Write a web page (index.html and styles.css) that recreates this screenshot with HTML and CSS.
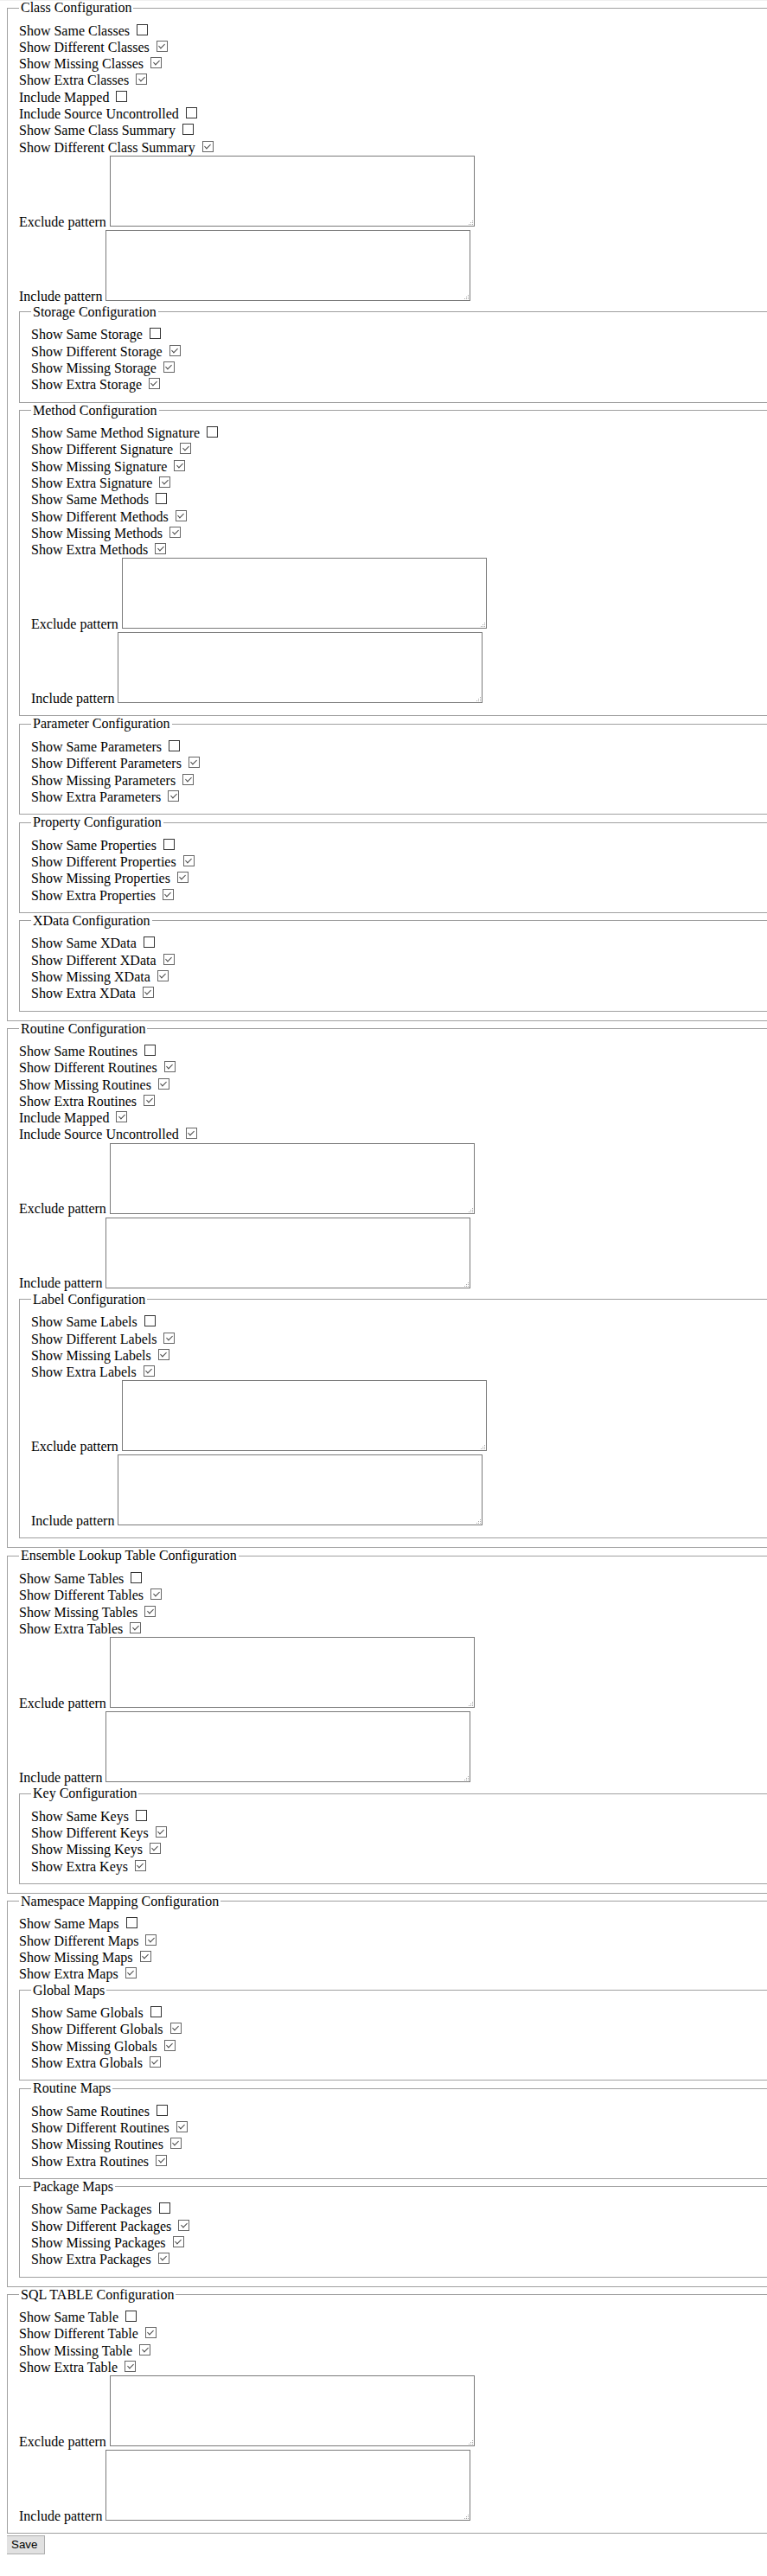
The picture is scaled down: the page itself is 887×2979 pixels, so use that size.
FILE: index.html
```html
<!DOCTYPE html>
<html>
<head>
<meta charset="utf-8">
<title>Configuration</title>
<link rel="stylesheet" href="styles.css">
</head>
<body>
<form class="config">
  <fieldset class="group">
    <legend>Class Configuration</legend>
    <label class="row">Show Same Classes <input type="checkbox"></label>
    <label class="row">Show Different Classes <input type="checkbox" checked></label>
    <label class="row">Show Missing Classes <input type="checkbox" checked></label>
    <label class="row">Show Extra Classes <input type="checkbox" checked></label>
    <label class="row">Include Mapped <input type="checkbox"></label>
    <label class="row">Include Source Uncontrolled <input type="checkbox"></label>
    <label class="row">Show Same Class Summary <input type="checkbox"></label>
    <label class="row">Show Different Class Summary <input type="checkbox" checked></label>
    <div class="pattern"><label>Exclude pattern</label><textarea></textarea></div>
    <div class="pattern"><label>Include pattern</label><textarea></textarea></div>

    <fieldset class="group sub">
      <legend>Storage Configuration</legend>
      <label class="row">Show Same Storage <input type="checkbox"></label>
      <label class="row">Show Different Storage <input type="checkbox" checked></label>
      <label class="row">Show Missing Storage <input type="checkbox" checked></label>
      <label class="row">Show Extra Storage <input type="checkbox" checked></label>
    </fieldset>

    <fieldset class="group sub">
      <legend>Method Configuration</legend>
      <label class="row">Show Same Method Signature <input type="checkbox"></label>
      <label class="row">Show Different Signature <input type="checkbox" checked></label>
      <label class="row">Show Missing Signature <input type="checkbox" checked></label>
      <label class="row">Show Extra Signature <input type="checkbox" checked></label>
      <label class="row">Show Same Methods <input type="checkbox"></label>
      <label class="row">Show Different Methods <input type="checkbox" checked></label>
      <label class="row">Show Missing Methods <input type="checkbox" checked></label>
      <label class="row">Show Extra Methods <input type="checkbox" checked></label>
      <div class="pattern"><label>Exclude pattern</label><textarea></textarea></div>
      <div class="pattern"><label>Include pattern</label><textarea></textarea></div>
    </fieldset>

    <fieldset class="group sub">
      <legend>Parameter Configuration</legend>
      <label class="row">Show Same Parameters <input type="checkbox"></label>
      <label class="row">Show Different Parameters <input type="checkbox" checked></label>
      <label class="row">Show Missing Parameters <input type="checkbox" checked></label>
      <label class="row">Show Extra Parameters <input type="checkbox" checked></label>
    </fieldset>

    <fieldset class="group sub">
      <legend>Property Configuration</legend>
      <label class="row">Show Same Properties <input type="checkbox"></label>
      <label class="row">Show Different Properties <input type="checkbox" checked></label>
      <label class="row">Show Missing Properties <input type="checkbox" checked></label>
      <label class="row">Show Extra Properties <input type="checkbox" checked></label>
    </fieldset>

    <fieldset class="group sub">
      <legend>XData Configuration</legend>
      <label class="row">Show Same XData <input type="checkbox"></label>
      <label class="row">Show Different XData <input type="checkbox" checked></label>
      <label class="row">Show Missing XData <input type="checkbox" checked></label>
      <label class="row">Show Extra XData <input type="checkbox" checked></label>
    </fieldset>
  </fieldset>

  <fieldset class="group">
    <legend>Routine Configuration</legend>
    <label class="row">Show Same Routines <input type="checkbox"></label>
    <label class="row">Show Different Routines <input type="checkbox" checked></label>
    <label class="row">Show Missing Routines <input type="checkbox" checked></label>
    <label class="row">Show Extra Routines <input type="checkbox" checked></label>
    <label class="row">Include Mapped <input type="checkbox" checked></label>
    <label class="row">Include Source Uncontrolled <input type="checkbox" checked></label>
    <div class="pattern"><label>Exclude pattern</label><textarea></textarea></div>
    <div class="pattern"><label>Include pattern</label><textarea></textarea></div>

    <fieldset class="group sub">
      <legend>Label Configuration</legend>
      <label class="row">Show Same Labels <input type="checkbox"></label>
      <label class="row">Show Different Labels <input type="checkbox" checked></label>
      <label class="row">Show Missing Labels <input type="checkbox" checked></label>
      <label class="row">Show Extra Labels <input type="checkbox" checked></label>
      <div class="pattern"><label>Exclude pattern</label><textarea></textarea></div>
      <div class="pattern"><label>Include pattern</label><textarea></textarea></div>
    </fieldset>
  </fieldset>

  <fieldset class="group">
    <legend>Ensemble Lookup Table Configuration</legend>
    <label class="row">Show Same Tables <input type="checkbox"></label>
    <label class="row">Show Different Tables <input type="checkbox" checked></label>
    <label class="row">Show Missing Tables <input type="checkbox" checked></label>
    <label class="row">Show Extra Tables <input type="checkbox" checked></label>
    <div class="pattern"><label>Exclude pattern</label><textarea></textarea></div>
    <div class="pattern"><label>Include pattern</label><textarea></textarea></div>

    <fieldset class="group sub">
      <legend>Key Configuration</legend>
      <label class="row">Show Same Keys <input type="checkbox"></label>
      <label class="row">Show Different Keys <input type="checkbox" checked></label>
      <label class="row">Show Missing Keys <input type="checkbox" checked></label>
      <label class="row">Show Extra Keys <input type="checkbox" checked></label>
    </fieldset>
  </fieldset>

  <fieldset class="group">
    <legend>Namespace Mapping Configuration</legend>
    <label class="row">Show Same Maps <input type="checkbox"></label>
    <label class="row">Show Different Maps <input type="checkbox" checked></label>
    <label class="row">Show Missing Maps <input type="checkbox" checked></label>
    <label class="row">Show Extra Maps <input type="checkbox" checked></label>

    <fieldset class="group sub">
      <legend>Global Maps</legend>
      <label class="row">Show Same Globals <input type="checkbox"></label>
      <label class="row">Show Different Globals <input type="checkbox" checked></label>
      <label class="row">Show Missing Globals <input type="checkbox" checked></label>
      <label class="row">Show Extra Globals <input type="checkbox" checked></label>
    </fieldset>

    <fieldset class="group sub">
      <legend>Routine Maps</legend>
      <label class="row">Show Same Routines <input type="checkbox"></label>
      <label class="row">Show Different Routines <input type="checkbox" checked></label>
      <label class="row">Show Missing Routines <input type="checkbox" checked></label>
      <label class="row">Show Extra Routines <input type="checkbox" checked></label>
    </fieldset>

    <fieldset class="group sub">
      <legend>Package Maps</legend>
      <label class="row">Show Same Packages <input type="checkbox"></label>
      <label class="row">Show Different Packages <input type="checkbox" checked></label>
      <label class="row">Show Missing Packages <input type="checkbox" checked></label>
      <label class="row">Show Extra Packages <input type="checkbox" checked></label>
    </fieldset>
  </fieldset>

  <fieldset class="group">
    <legend>SQL TABLE Configuration</legend>
    <label class="row">Show Same Table <input type="checkbox"></label>
    <label class="row">Show Different Table <input type="checkbox" checked></label>
    <label class="row">Show Missing Table <input type="checkbox" checked></label>
    <label class="row">Show Extra Table <input type="checkbox" checked></label>
    <div class="pattern"><label>Exclude pattern</label><textarea></textarea></div>
    <div class="pattern"><label>Include pattern</label><textarea></textarea></div>
  </fieldset>

  <button type="button" class="save">Save</button>
</form>
</body>
</html>
```

FILE: styles.css
```css
html {
  background: linear-gradient(#f0f0f0, #f0f0f0) top left / 100% 1px no-repeat, #fff;
}

body {
  margin: 0 0 0 8px;
  font-family: "Liberation Serif", "Times New Roman", serif;
  font-size: 16px;
  color: #000;
}

.config {
  margin: 0;
}

.group {
  margin: 0;
  padding: 7.5px 0 10px 13px;
  border: 1px solid #a0a0a0;
  border-right: none;
  min-width: 0;
}

.group legend {
  padding: 0 2px;
  line-height: normal;
}

.row {
  display: block;
  height: 19.3px;
  line-height: 19.3px;
  white-space: nowrap;
}

.row input[type="checkbox"] {
  -webkit-appearance: none;
  appearance: none;
  position: relative;
  display: inline-block;
  width: 13px;
  height: 13px;
  margin: 0 0 0 4px;
  padding: 0;
  border: 1px solid #333;
  background: #fff;
  box-sizing: border-box;
  vertical-align: baseline;
}

.row input[type="checkbox"]:checked {
  border-color: #666;
}

.row input[type="checkbox"]:checked::after {
  content: "";
  position: absolute;
  left: 3.5px;
  top: 1px;
  width: 3px;
  height: 6px;
  border: solid #4a4a4a;
  border-width: 0 1px 1px 0;
  transform: rotate(45deg);
}

.pattern {
  display: flex;
  align-items: flex-end;
  column-gap: 4px;
  white-space: nowrap;
}

.pattern label {
  line-height: 19.3px;
}

.pattern textarea {
  box-sizing: border-box;
  width: 422px;
  height: 82px;
  margin: 0 0 4px 0;
  padding: 2px;
  border: 1px solid #7a7a7a;
  resize: none;
  font-family: "Liberation Mono", monospace;
  font-size: 13px;
  background-color: #fff;
  background-image:
    linear-gradient(#a8a8a8, #a8a8a8),
    linear-gradient(#a8a8a8, #a8a8a8),
    linear-gradient(#a8a8a8, #a8a8a8),
    linear-gradient(#a8a8a8, #a8a8a8),
    linear-gradient(#a8a8a8, #a8a8a8),
    linear-gradient(#a8a8a8, #a8a8a8);
  background-size: 1px 1px;
  background-repeat: no-repeat;
  background-position:
    right 2px bottom 2px,
    right 4px bottom 2px,
    right 6px bottom 2px,
    right 2px bottom 4px,
    right 4px bottom 4px,
    right 2px bottom 6px;
  background-origin: border-box;
}

.save {
  margin: 2px 0 0 -4px;
  padding: 2px 8px 3px;
  font-family: "Liberation Sans", Arial, sans-serif;
  font-size: 13.33px;
  line-height: 15px;
  color: #000;
  background: #e1e1e1;
  border: 1px solid #adadad;
  border-radius: 0;
}
```
